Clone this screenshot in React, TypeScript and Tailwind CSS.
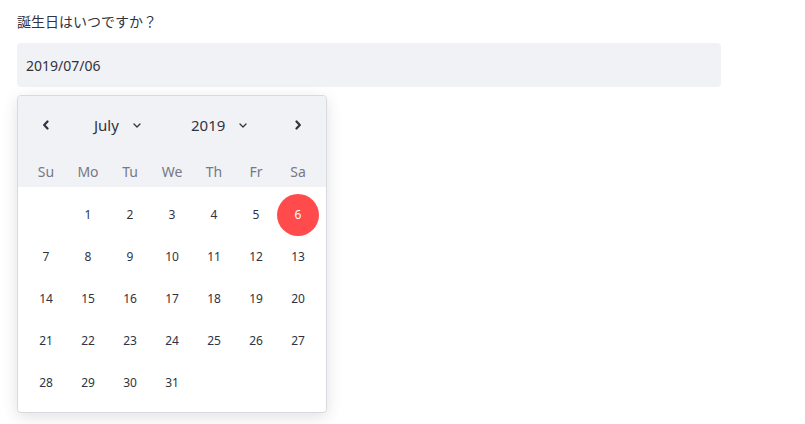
import React from "react"

const weekdays = ["Su", "Mo", "Tu", "We", "Th", "Fr", "Sa"]

// July 2019 starts on a Monday
const cells: (number | null)[] = [null, ...Array.from({ length: 31 }, (_, i) => i + 1)]
while (cells.length % 7 !== 0) cells.push(null)

const rows: (number | null)[][] = []
for (let i = 0; i < cells.length; i += 7) rows.push(cells.slice(i, i + 7))

const font = { fontFamily: '"Noto Sans", "Noto Sans CJK JP", sans-serif' }

function NavChevron({ dir }: { dir: "left" | "right" }) {
  return (
    <svg width="8" height="10" viewBox="0 0 8 10" fill="none">
      <path
        d={dir === "left" ? "M5.5 1.5 L2.2 5 L5.5 8.5" : "M2.5 1.5 L5.8 5 L2.5 8.5"}
        stroke="#31333f"
        strokeWidth="2.2"
        strokeLinecap="round"
        strokeLinejoin="round"
      />
    </svg>
  )
}

function DownChevron() {
  return (
    <svg width="8" height="5" viewBox="0 0 8 5" fill="none">
      <path d="M1 1 L4 4 L7 1" stroke="#31333f" strokeWidth="1.3" strokeLinecap="round" strokeLinejoin="round" />
    </svg>
  )
}

export default function App() {
  return (
    <div className="min-h-screen w-full bg-white pl-[17px] text-[#31333f]" style={font}>
      <div className="pt-[12px] text-[14px] leading-[20px]">誕生日はいつですか？</div>

      <div className="mt-[11px] flex h-[44px] w-[704px] items-center rounded-[4px] bg-[#f0f2f6] pl-[9px] text-[14px]">
        2019/07/06
      </div>

      <div className="mt-[8px] w-[310px] overflow-hidden rounded-[4px] border border-[#d9dadf] bg-white shadow-[0_4px_16px_rgba(0,0,0,0.12)]">
        {/* header */}
        <div className="bg-[#f0f2f6] px-[7px] pt-[11px]">
          <div className="flex h-[36px] items-center">
            <div className="flex w-[42px] justify-center">
              <NavChevron dir="left" />
            </div>
            <div className="flex flex-1 items-center pl-[27px]">
              <div className="flex w-[97px] items-center gap-[14px] text-[15px]">
                <span>July</span>
                <DownChevron />
              </div>
              <div className="flex items-center gap-[14px] text-[15px]">
                <span>2019</span>
                <DownChevron />
              </div>
            </div>
            <div className="flex w-[42px] justify-center">
              <NavChevron dir="right" />
            </div>
          </div>
          <div className="mt-[13px] grid h-[31px] grid-cols-7 items-center">
            {weekdays.map((d) => (
              <div key={d} className="text-center text-[14px] text-[#767985]">
                {d}
              </div>
            ))}
          </div>
        </div>

        {/* days */}
        <div className="px-[7px] pb-[8px] pt-[7px]">
          {rows.map((row, r) => (
            <div key={r} className="grid grid-cols-7">
              {row.map((day, c) => (
                <div key={c} className="flex h-[42px] items-center justify-center">
                  {day !== null &&
                    (day === 6 ? (
                      <div className="flex h-[42px] w-[42px] items-center justify-center rounded-full bg-[#ff4b4b] text-[12px] text-white">
                        {day}
                      </div>
                    ) : (
                      <span className="text-[12px]">{day}</span>
                    ))}
                </div>
              ))}
            </div>
          ))}
        </div>
      </div>
    </div>
  )
}
